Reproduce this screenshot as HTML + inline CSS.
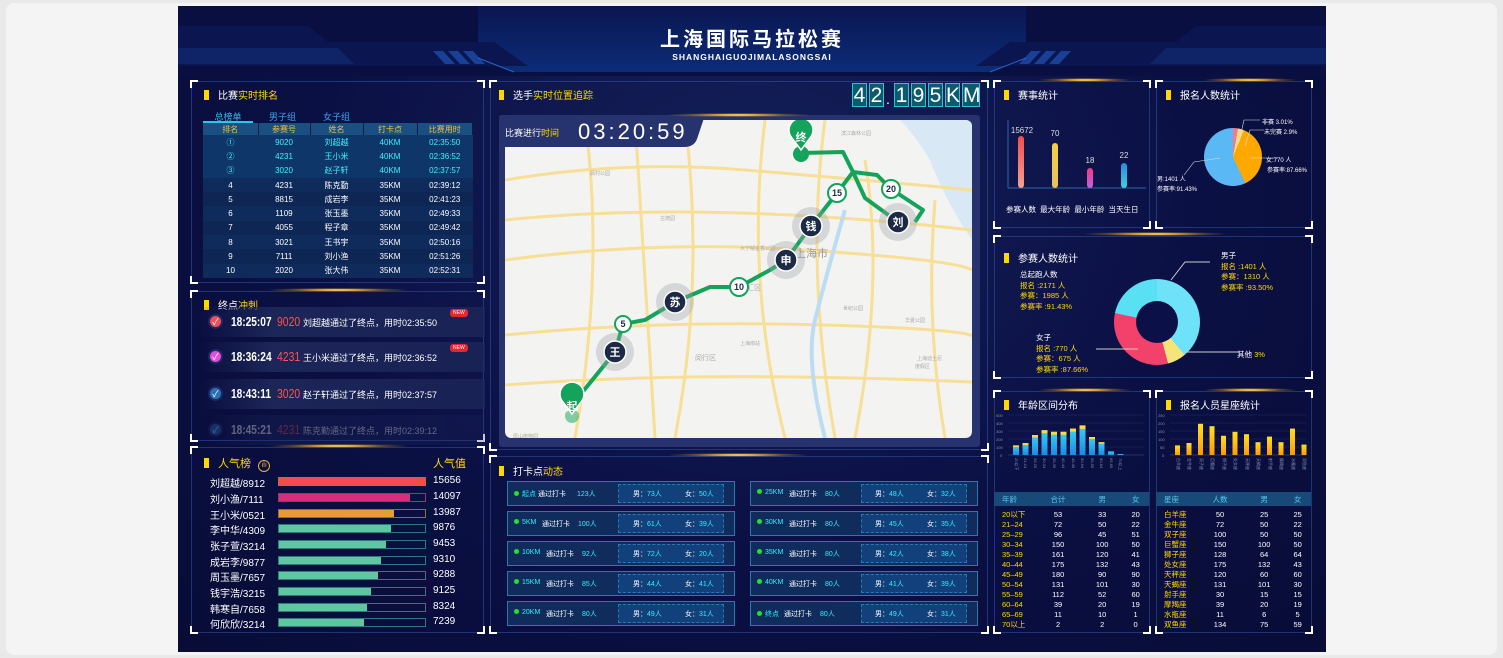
<!DOCTYPE html><html><head><meta charset="utf-8"><style>
*{margin:0;padding:0;box-sizing:border-box}
body{width:1503px;height:658px;background:#e9e9e9;font-family:"Liberation Sans","Noto Sans CJK SC",sans-serif;overflow:hidden;position:relative}
.frame{position:absolute;left:6px;top:3px;width:1491px;height:652px;background:#f4f4f4;border-radius:8px}
.dash{position:absolute;left:178px;top:6px;width:1148px;height:646px;background:radial-gradient(ellipse at 50% 30%,#15205a 0%,#0b1044 55%,#080c36 100%);overflow:hidden}
.a{position:absolute}
.p{position:absolute;border:1px solid rgba(45,85,170,.55)}
.p::after{content:"";position:absolute;left:-2px;top:-2px;right:-2px;bottom:-2px;background:
linear-gradient(#fff,#fff) left top/8px 2px no-repeat,linear-gradient(#fff,#fff) left top/2px 8px no-repeat,
linear-gradient(#fff,#fff) right top/8px 2px no-repeat,linear-gradient(#fff,#fff) right top/2px 8px no-repeat,
linear-gradient(#fff,#fff) left bottom/8px 2px no-repeat,linear-gradient(#fff,#fff) left bottom/2px 8px no-repeat,
linear-gradient(#fff,#fff) right bottom/8px 2px no-repeat,linear-gradient(#fff,#fff) right bottom/2px 8px no-repeat;pointer-events:none}
.t{position:absolute;color:#fff;font-size:10px;white-space:nowrap}
.t::before{content:"";display:inline-block;width:5px;height:10px;background:#ffd800;margin-right:9px;vertical-align:-1px}
.y{color:#ffd800}
.glow{position:absolute;height:4px;background:radial-gradient(ellipse at center,#fff6c0 0%,#f5b82a 20%,rgba(200,140,30,.4) 50%,rgba(0,0,0,0) 75%)}
table{border-collapse:collapse}
.rk{position:absolute;left:203px;top:123px;width:270px;font-size:8px;color:#fff}
.rk td{height:14.3px;text-align:center;padding:0}
.rk tr.h td{background:#1a4f82;color:#f2c33a;height:12px;border-right:1px solid #0b1b45}
.rk tr.g td{background:#0f3668;color:#3ff0ff}
.rk tr.n td{background:#0d2654}
.rk tr:nth-child(odd).n td{background:#0f2b5c}
.fin{position:absolute;left:200px;width:285px;height:30px;background:linear-gradient(90deg,rgba(30,40,90,0) 0%,rgba(30,40,90,.9) 25%,rgba(30,40,90,.7) 100%);font-size:11px;color:#fff;white-space:nowrap}
.fin .ic{position:absolute;left:8px;top:7px;width:15px;height:15px;border-radius:50%;border:2px solid #1d2a62;color:#fff;font-size:9px;text-align:center;line-height:12px}
.fin .tm{position:absolute;left:31px;top:7px;font-weight:bold;font-size:13px;transform:scaleX(.78);transform-origin:left}
.fin .nu{position:absolute;left:77px;top:7px;color:#ff5252;font-size:13px;transform:scaleX(.8);transform-origin:left}
.fin .tx{position:absolute;left:103px;top:9px;font-size:9px}
.new{position:absolute;left:250px;top:2px;background:#e3262f;color:#fff;font-size:5px;padding:1px 3px;border-radius:3px}
.pop{position:absolute;left:210px;font-size:10px;color:#fff;white-space:nowrap;height:14px}
.pop .bar{position:absolute;left:68px;top:2px;width:148px;height:9px;border:1px solid;}
.pop .f{height:100%}
.pop .v{position:absolute;left:223px;top:0}
.ck{position:absolute;height:25px;width:228px;border:1px solid #2a78b0;background:#0f2c5c;font-size:7px;color:#fff;white-space:nowrap}
.ck .r{position:absolute;left:110px;top:2px;right:10px;bottom:2px;background:#12407a;border:1px dashed rgba(60,160,220,.6)}
.ck span{position:absolute;top:7px}
.cy{color:#30f0ff}
.dot{display:inline-block;width:5px;height:5px;border-radius:50%;background:#24e02a;margin-right:3px}
.dg{display:inline-block;width:15px;height:24px;margin-right:2px;background:#0c5a6e;border:1px solid #2bc3d8;color:#fff;font-size:21px;text-align:center;line-height:24px}
.tb{position:absolute;font-size:7.5px;color:#fff;width:155px;line-height:9px}
.tb td{text-align:center;height:9.95px;padding:0;line-height:9px}
.tb td:first-child{color:#ffd800;text-align:left;padding-left:8px}
.tb tr.h td{background:#174a78;color:#58c6f0;height:14px}
.lbl{position:absolute;font-size:6px;color:#fff;white-space:nowrap}
</style></head><body>
<div class="frame"></div>
<div class="dash">
<svg class="a" style="left:0;top:0" width="1148" height="70">
<defs><linearGradient id="hg" x1="0" y1="0" x2="0" y2="1"><stop offset="0" stop-color="#0a1650"/><stop offset="1" stop-color="#0c2c78"/></linearGradient></defs>
<rect x="0" y="0" width="1148" height="70" fill="#0a0f42"/>
<polygon points="300,0 848,0 848,52 812,66 336,66 300,52" fill="url(#hg)"/>
<polygon points="0,20 130,20 150,36 316,36 350,60 0,60" fill="#0b1650"/>
<polygon points="1148,20 1018,20 998,36 832,36 798,60 1148,60" fill="#0b1650"/>
<polygon points="0,42 160,42 176,58 0,58" fill="#0e2466"/>
<polygon points="1148,42 988,42 972,58 1148,58" fill="#0e2466"/>
<polygon points="255,45 265,45 277,58 267,58" fill="#1a3f96"/><polygon points="270,45 280,45 292,58 282,58" fill="#1a3f96"/><polygon points="285,45 295,45 307,58 297,58" fill="#1a3f96"/>
<polygon points="893,45 883,45 871,58 881,58" fill="#1a3f96"/><polygon points="878,45 868,45 856,58 866,58" fill="#1a3f96"/><polygon points="863,45 853,45 841,58 851,58" fill="#1a3f96"/>
<line x1="300" y1="52" x2="336" y2="66" stroke="#2a64c0"/><line x1="848" y1="52" x2="812" y2="66" stroke="#2a64c0"/>
</svg>
<div class="a" style="left:0;top:17px;width:1148px;text-align:center;color:#fff;font-size:20px;font-weight:bold;letter-spacing:3px">上海国际马拉松赛</div>
<div class="a" style="left:0;top:46px;width:1148px;text-align:center;color:#fff;font-size:8.5px;font-weight:bold;letter-spacing:1px">SHANGHAIGUOJIMALASONGSAI</div>
</div>

<div class="p" style="left:191px;top:81px;width:293px;height:202px"></div>
<div class="t" style="left:204px;top:87px">比赛<span class="y">实时排名</span></div>
<div class="a" style="left:203px;top:110px;width:50px;font-size:9px;color:#3ab8e8;text-align:center;border-bottom:2px solid #29c8ea;height:13px">总榜单</div>
<div class="a" style="left:269px;top:110px;font-size:9px;color:#3a9ee8">男子组</div>
<div class="a" style="left:323px;top:110px;font-size:9px;color:#3a9ee8">女子组</div>
<table class="rk"><tr class="h"><td style="width:55px">排名</td><td style="width:52px">参赛号</td><td style="width:53px">姓名</td><td style="width:54px">打卡点</td><td>比赛用时</td></tr>
<tr class="g"><td>①</td><td>9020</td><td>刘超越</td><td>40KM</td><td>02:35:50</td></tr>
<tr class="g"><td>②</td><td>4231</td><td>王小米</td><td>40KM</td><td>02:36:52</td></tr>
<tr class="g"><td>③</td><td>3020</td><td>赵子轩</td><td>40KM</td><td>02:37:57</td></tr>
<tr class="n"><td>4</td><td>4231</td><td>陈克勤</td><td>35KM</td><td>02:39:12</td></tr>
<tr class="n"><td>5</td><td>8815</td><td>成岩李</td><td>35KM</td><td>02:41:23</td></tr>
<tr class="n"><td>6</td><td>1109</td><td>张玉墨</td><td>35KM</td><td>02:49:33</td></tr>
<tr class="n"><td>7</td><td>4055</td><td>程子章</td><td>35KM</td><td>02:49:42</td></tr>
<tr class="n"><td>8</td><td>3021</td><td>王书宇</td><td>35KM</td><td>02:50:16</td></tr>
<tr class="n"><td>9</td><td>7111</td><td>刘小渔</td><td>35KM</td><td>02:51:26</td></tr>
<tr class="n"><td>10</td><td>2020</td><td>张大伟</td><td>35KM</td><td>02:52:31</td></tr></table>

<div class="glow" style="left:270px;top:288px;width:136px"></div>
<div class="p" style="left:191px;top:291px;width:293px;height:150px"></div>
<div class="t" style="left:204px;top:297px">终点<span class="y">冲刺</span></div>
<div class="fin" style="top:307px"><div class="ic" style="background:#f04e5a">✓</div><div class="tm">18:25:07</div><div class="nu">9020</div><div class="tx">刘超越通过了终点，用时02:35:50</div><div class="new">NEW</div></div>
<div class="fin" style="top:342px"><div class="ic" style="background:#e050d8">✓</div><div class="tm">18:36:24</div><div class="nu">4231</div><div class="tx">王小米通过了终点，用时02:36:52</div><div class="new">NEW</div></div>
<div class="fin" style="top:379px"><div class="ic" style="background:#2a70b8">✓</div><div class="tm">18:43:11</div><div class="nu">3020</div><div class="tx">赵子轩通过了终点，用时02:37:57</div></div>
<div class="fin" style="top:415px;opacity:.35"><div class="ic" style="background:#2a70b8">✓</div><div class="tm">18:45:21</div><div class="nu">4231</div><div class="tx">陈克勤通过了终点，用时02:39:12</div></div>

<div class="glow" style="left:270px;top:444px;width:136px"></div>
<div class="p" style="left:191px;top:447px;width:293px;height:186px"></div>
<div class="t" style="left:204px;top:455px;font-size:11px"><span class="y">人气榜</span> <span style="display:inline-block;width:12px;height:12px;border:1px solid #e6b23a;border-radius:50%;color:#e6b23a;font-size:7px;text-align:center;line-height:10px;margin-left:4px">ılı</span></div>
<div class="a y" style="left:433px;top:455px;font-size:11px">人气值</div>
<div class="pop" style="top:475px">刘超越/8912<div class="bar" style="border-color:#f04e4e"><div class="f" style="width:100%;background:#f04e4e"></div></div><div class="v">15656</div></div>
<div class="pop" style="top:491px">刘小渔/7111<div class="bar" style="border-color:#a0306a"><div class="f" style="width:90%;background:#d32f7d"></div></div><div class="v">14097</div></div>
<div class="pop" style="top:507px">王小米/0521<div class="bar" style="border-color:#a06a20"><div class="f" style="width:79%;background:#e79d35"></div></div><div class="v">13987</div></div>
<div class="pop" style="top:522px">李中华/4309<div class="bar" style="border-color:#2f7a78"><div class="f" style="width:77%;background:#5ec6a0"></div></div><div class="v">9876</div></div>
<div class="pop" style="top:538px">张子萱/3214<div class="bar" style="border-color:#2f7a78"><div class="f" style="width:73%;background:#5ec6a0"></div></div><div class="v">9453</div></div>
<div class="pop" style="top:554px">成岩李/9877<div class="bar" style="border-color:#2f7a78"><div class="f" style="width:70%;background:#5ec6a0"></div></div><div class="v">9310</div></div>
<div class="pop" style="top:569px">周玉墨/7657<div class="bar" style="border-color:#2f7a78"><div class="f" style="width:68%;background:#5ec6a0"></div></div><div class="v">9288</div></div>
<div class="pop" style="top:585px">钱宇浩/3215<div class="bar" style="border-color:#2f7a78"><div class="f" style="width:63%;background:#5ec6a0"></div></div><div class="v">9125</div></div>
<div class="pop" style="top:601px">韩寒自/7658<div class="bar" style="border-color:#2f7a78"><div class="f" style="width:60%;background:#5ec6a0"></div></div><div class="v">8324</div></div>
<div class="pop" style="top:616px">何欣欣/3214<div class="bar" style="border-color:#2f7a78"><div class="f" style="width:58%;background:#5ec6a0"></div></div><div class="v">7239</div></div>

<div class="p" style="left:490px;top:81px;width:498px;height:369px"></div>
<div class="t" style="left:499px;top:87px">选手<span class="y">实时位置追踪</span></div>
<div class="a" style="left:852px;top:83px;white-space:nowrap"><span class="dg">4</span><span class="dg">2</span><span style="display:inline-block;width:8px;color:#fff;font-size:14px;vertical-align:bottom">.</span><span class="dg">1</span><span class="dg">9</span><span class="dg">5</span><span class="dg">K</span><span class="dg" style="width:18px">M</span></div>
<div class="a" style="left:499px;top:115px;width:481px;height:332px;background:#27336e;border-radius:3px"></div>
<svg class="a" style="left:505px;top:120px;border-radius:6px" width="467" height="318" viewBox="0 0 467 318">
<rect width="467" height="318" rx="6" fill="#f3f3f1"/>
<path d="M395,0 L467,0 L467,120 Q440,80 425,40 Q410,15 395,0Z" fill="#d9e8f5"/>
<g fill="none" stroke="#f8df96" stroke-width="3">
<path d="M0,60 Q120,40 240,50 T467,70"/><path d="M0,140 Q150,120 300,130 T467,150"/><path d="M0,215 Q150,200 320,205 T467,220"/>
<path d="M0,265 Q200,250 467,262"/><path d="M80,0 Q100,150 70,318"/><path d="M180,0 Q200,160 170,318"/><path d="M260,0 Q240,160 280,318"/><path d="M360,40 Q380,160 350,318"/><path d="M430,80 Q420,200 440,318"/>
<path d="M0,100 Q200,80 467,110"/><path d="M130,0 L150,318"/><path d="M320,0 Q300,150 330,318"/>
</g>
<path d="M340,90 Q320,160 310,200 Q300,240 320,318" fill="none" stroke="#bcdcf3" stroke-width="4"/>
<text x="290" y="137" font-size="11" fill="#9a9a9a">上海市</text>
<text x="235" y="170" font-size="7" fill="#aaa">徐汇区</text>
<text x="190" y="240" font-size="7" fill="#aaa">闵行区</text>
<text x="235" y="225" font-size="5" fill="#aaa">上海南站</text>
<text x="336" y="15" font-size="5" fill="#aaa">滨江森林公园</text>
<text x="412" y="240" font-size="5" fill="#aaa">上海迪士尼</text>
<text x="410" y="248" font-size="5" fill="#aaa">度假区</text>
<text x="400" y="202" font-size="5" fill="#aaa">华夏公园</text>
<text x="338" y="190" font-size="5" fill="#aaa">世纪公园</text>
<text x="235" y="130" font-size="5" fill="#aaa">大宁郁金香公园</text>
<text x="155" y="100" font-size="5" fill="#aaa">古猗园</text>
<text x="85" y="55" font-size="5" fill="#aaa">顾村公园</text>
<text x="8" y="318" font-size="5" fill="#aaa">辰山植物园</text>
<g fill="none" stroke="#13a35a" stroke-width="4" stroke-linejoin="round">
<path d="M67,285 L110,232 L118,204 L140,200 L170,182 L205,167 L234,167 L265,150 L281,140 L306,106 L332,73 L348,52 L338,32 L296,33"/>
<path d="M348,52 L372,55 L386,69 L418,90 L410,102"/><path d="M348,52 L360,78 L393,102"/>
</g>
<g font-size="11" font-weight="bold" text-anchor="middle">
<circle cx="110" cy="232" r="19" fill="#9da0a8" opacity=".35"/><circle cx="110" cy="232" r="11" fill="#1d2a45" stroke="#fff" stroke-width="1.5"/><text x="110" y="236" fill="#fff">王</text>
<circle cx="170" cy="182" r="19" fill="#9da0a8" opacity=".35"/><circle cx="170" cy="182" r="11" fill="#1d2a45" stroke="#fff" stroke-width="1.5"/><text x="170" y="186" fill="#fff">苏</text>
<circle cx="281" cy="140" r="19" fill="#9da0a8" opacity=".35"/><circle cx="281" cy="140" r="11" fill="#1d2a45" stroke="#fff" stroke-width="1.5"/><text x="281" y="144" fill="#fff">申</text>
<circle cx="306" cy="106" r="19" fill="#9da0a8" opacity=".35"/><circle cx="306" cy="106" r="11" fill="#1d2a45" stroke="#fff" stroke-width="1.5"/><text x="306" y="110" fill="#fff">钱</text>
<circle cx="393" cy="102" r="19" fill="#9da0a8" opacity=".35"/><circle cx="393" cy="102" r="11" fill="#1d2a45" stroke="#fff" stroke-width="1.5"/><text x="393" y="106" fill="#fff">刘</text>
<g font-size="9"><circle cx="118" cy="204" r="8" fill="#fff" stroke="#13a35a" stroke-width="2"/><text x="118" y="207" fill="#1d2a45">5</text>
<circle cx="234" cy="167" r="9" fill="#fff" stroke="#13a35a" stroke-width="2"/><text x="234" y="170" fill="#1d2a45">10</text>
<circle cx="332" cy="73" r="9" fill="#fff" stroke="#13a35a" stroke-width="2"/><text x="332" y="76" fill="#1d2a45">15</text>
<circle cx="386" cy="69" r="9" fill="#fff" stroke="#13a35a" stroke-width="2"/><text x="386" y="72" fill="#1d2a45">20</text></g>
<circle cx="67" cy="296" r="7" fill="#13a35a" opacity=".5"/><path d="M67,294 L58,282 A12,12 0 1 1 76,282Z" fill="#13a35a" stroke="#fff" stroke-width="1.5"/><text x="67" y="290" fill="#fff">起</text>
<circle cx="296" cy="34" r="8" fill="#13a35a"/><path d="M296,30 L287,18 A12,12 0 1 1 305,18Z" fill="#13a35a" stroke="#fff" stroke-width="1.5"/><text x="296" y="21" fill="#fff">终</text>
</g>
</svg>
<svg class="a" style="left:499px;top:115px" width="206" height="33"><path d="M3,0 L203,0 Q206,0 204,6 L198,24 Q195,32 185,32 L0,32 L0,3 Q0,0 3,0Z" fill="#27336e"/></svg>
<div class="a" style="left:505px;top:126px;font-size:9px;color:#fff">比赛进行<span class="y">时间</span></div>
<div class="a" style="left:578px;top:119px;font-size:22px;color:#fff;letter-spacing:3px">03:20:59</div>
<div class="glow" style="left:668px;top:113px;width:140px"></div>

<div class="glow" style="left:670px;top:453px;width:136px"></div>
<div class="p" style="left:490px;top:456px;width:498px;height:177px"></div>
<div class="t" style="left:499px;top:463px">打卡点<span class="y">动态</span></div>
<div class="ck" style="left:507px;top:481px"><div class="r"></div><span style="left:6px"><i class="dot"></i><b class="cy" style="font-weight:normal">起点</b></span><span style="left:30px">通过打卡</span><span style="left:69px" class="cy">123人</span><span style="left:125px">男：<b class="cy" style="font-weight:normal">73人</b></span><span style="left:177px">女：<b class="cy" style="font-weight:normal">50人</b></span></div>
<div class="ck" style="left:507px;top:511px"><div class="r"></div><span style="left:6px"><i class="dot"></i><b class="cy" style="font-weight:normal">5KM</b></span><span style="left:34px">通过打卡</span><span style="left:70px" class="cy">100人</span><span style="left:125px">男：<b class="cy" style="font-weight:normal">61人</b></span><span style="left:177px">女：<b class="cy" style="font-weight:normal">39人</b></span></div>
<div class="ck" style="left:507px;top:541px"><div class="r"></div><span style="left:6px"><i class="dot"></i><b class="cy" style="font-weight:normal">10KM</b></span><span style="left:38px">通过打卡</span><span style="left:74px" class="cy">92人</span><span style="left:125px">男：<b class="cy" style="font-weight:normal">72人</b></span><span style="left:177px">女：<b class="cy" style="font-weight:normal">20人</b></span></div>
<div class="ck" style="left:507px;top:571px"><div class="r"></div><span style="left:6px"><i class="dot"></i><b class="cy" style="font-weight:normal">15KM</b></span><span style="left:38px">通过打卡</span><span style="left:74px" class="cy">85人</span><span style="left:125px">男：<b class="cy" style="font-weight:normal">44人</b></span><span style="left:177px">女：<b class="cy" style="font-weight:normal">41人</b></span></div>
<div class="ck" style="left:507px;top:601px"><div class="r"></div><span style="left:6px"><i class="dot"></i><b class="cy" style="font-weight:normal">20KM</b></span><span style="left:38px">通过打卡</span><span style="left:74px" class="cy">80人</span><span style="left:125px">男：<b class="cy" style="font-weight:normal">49人</b></span><span style="left:177px">女：<b class="cy" style="font-weight:normal">31人</b></span></div>
<div class="ck" style="left:750px;top:481px"><div class="r"></div><span style="left:6px"><i class="dot"></i><b class="cy" style="font-weight:normal">25KM</b></span><span style="left:38px">通过打卡</span><span style="left:74px" class="cy">80人</span><span style="left:124px">男：<b class="cy" style="font-weight:normal">48人</b></span><span style="left:176px">女：<b class="cy" style="font-weight:normal">32人</b></span></div>
<div class="ck" style="left:750px;top:511px"><div class="r"></div><span style="left:6px"><i class="dot"></i><b class="cy" style="font-weight:normal">30KM</b></span><span style="left:38px">通过打卡</span><span style="left:74px" class="cy">80人</span><span style="left:124px">男：<b class="cy" style="font-weight:normal">45人</b></span><span style="left:176px">女：<b class="cy" style="font-weight:normal">35人</b></span></div>
<div class="ck" style="left:750px;top:541px"><div class="r"></div><span style="left:6px"><i class="dot"></i><b class="cy" style="font-weight:normal">35KM</b></span><span style="left:38px">通过打卡</span><span style="left:74px" class="cy">80人</span><span style="left:124px">男：<b class="cy" style="font-weight:normal">42人</b></span><span style="left:176px">女：<b class="cy" style="font-weight:normal">38人</b></span></div>
<div class="ck" style="left:750px;top:571px"><div class="r"></div><span style="left:6px"><i class="dot"></i><b class="cy" style="font-weight:normal">40KM</b></span><span style="left:38px">通过打卡</span><span style="left:74px" class="cy">80人</span><span style="left:124px">男：<b class="cy" style="font-weight:normal">41人</b></span><span style="left:176px">女：<b class="cy" style="font-weight:normal">39人</b></span></div>
<div class="ck" style="left:750px;top:601px"><div class="r"></div><span style="left:6px"><i class="dot"></i><b class="cy" style="font-weight:normal">终点</b></span><span style="left:33px">通过打卡</span><span style="left:69px" class="cy">80人</span><span style="left:124px">男：<b class="cy" style="font-weight:normal">49人</b></span><span style="left:176px">女：<b class="cy" style="font-weight:normal">31人</b></span></div>

<div class="glow" style="left:1040px;top:78px;width:90px"></div><div class="glow" style="left:1205px;top:78px;width:90px"></div>
<div class="p" style="left:994px;top:81px;width:156px;height:147px"></div>
<div class="t" style="left:1004px;top:87px">赛事统计</div>
<svg class="a" style="left:1000px;top:120px" width="150" height="100">
<line x1="8" y1="0" x2="8" y2="68" stroke="#2a6aa8"/><line x1="8" y1="68" x2="146" y2="68" stroke="#2a6aa8"/>
<defs><linearGradient id="r1" x1="0" y1="0" x2="0" y2="1"><stop offset="0" stop-color="#f04e4e"/><stop offset="1" stop-color="#f5a090"/></linearGradient>
<linearGradient id="r2" x1="0" y1="0" x2="0" y2="1"><stop offset="0" stop-color="#f5d040"/><stop offset="1" stop-color="#e8c060"/></linearGradient>
<linearGradient id="r3" x1="0" y1="0" x2="0" y2="1"><stop offset="0" stop-color="#f03a80"/><stop offset="1" stop-color="#c060e0"/></linearGradient>
<linearGradient id="r4" x1="0" y1="0" x2="0" y2="1"><stop offset="0" stop-color="#2a8ae0"/><stop offset="1" stop-color="#40d0e0"/></linearGradient></defs>
<rect x="18" y="16" width="6" height="52" rx="3" fill="url(#r1)"/><rect x="52" y="23" width="6" height="45" rx="3" fill="url(#r2)"/><rect x="87" y="48" width="6" height="20" rx="3" fill="url(#r3)"/><rect x="121" y="43" width="6" height="25" rx="3" fill="url(#r4)"/>
<g fill="#ddd" font-size="8" text-anchor="middle"><text x="22" y="13">15672</text><text x="55" y="16">70</text><text x="90" y="43">18</text><text x="124" y="38">22</text></g>
</svg>
<div class="a" style="left:1006px;top:204px;font-size:7.5px;color:#fff;white-space:nowrap">参赛人数 &nbsp;最大年龄 &nbsp;最小年龄 &nbsp;当天生日</div>

<div class="p" style="left:1156px;top:81px;width:156px;height:147px"></div>
<div class="t" style="left:1166px;top:87px">报名人数统计</div>
<div class="a" style="left:1204px;top:128px;width:58px;height:58px;border-radius:50%;background:conic-gradient(#f27a8c 0 10deg,#f5dc80 10deg 22deg,#ffa800 22deg 155deg,#5ab8f5 155deg 360deg)"></div>
<svg class="a" style="left:1150px;top:110px" width="160" height="90" fill="none" stroke="#ddd" stroke-width=".6">
<polyline points="89,32 94,10 110,10"/><polyline points="95,36 100,20 114,20"/><polyline points="100,48 128,48"/><polyline points="70,48 44,52 34,65"/></svg>
<div class="lbl" style="left:1262px;top:117px">非赛 3.01%</div><div class="lbl" style="left:1264px;top:127px">未完赛 2.9%</div>
<div class="lbl" style="left:1266px;top:155px">女:770 人</div><div class="lbl y" style="left:1267px;top:165px">参赛率:87.66%</div>
<div class="lbl" style="left:1157px;top:174px">男:1401 人</div><div class="lbl y" style="left:1157px;top:184px">参赛率:91.43%</div>

<div class="glow" style="left:1085px;top:232px;width:140px"></div>
<div class="p" style="left:994px;top:236px;width:318px;height:142px"></div>
<div class="t" style="left:1004px;top:250px">参赛人数统计</div>
<div class="a" style="left:1114px;top:279px;width:86px;height:86px;border-radius:50%;background:conic-gradient(#6ee2f8 0 140deg,#f5e47a 140deg 165deg,#f2416a 165deg 282deg,#5ae0f5 282deg 360deg)"></div>
<div class="a" style="left:1136px;top:301px;width:42px;height:42px;border-radius:50%;background:#0b1148"></div>
<svg class="a" style="left:1080px;top:260px" width="160" height="110" fill="none" stroke="#ccc" stroke-width="1"><polyline points="91,20 105,2 130,2"/><polyline points="58,89 16,89"/><polyline points="104,92 160,92"/></svg>
<div class="a" style="left:1020px;top:270px;font-size:7.5px;color:#fff;line-height:10.5px">总起跑人数<br><span class="y">报名 :2171 人<br>参赛：1985 人<br>参赛率 :91.43%</span></div>
<div class="a" style="left:1036px;top:333px;font-size:7.5px;color:#fff;line-height:10.5px">女子<br><span class="y">报名 :770 人<br>参赛：675 人<br>参赛率 :87.66%</span></div>
<div class="a" style="left:1221px;top:251px;font-size:7.5px;color:#fff;line-height:10.5px">男子<br><span class="y">报名 :1401 人<br>参赛：1310 人<br>参赛率 :93.50%</span></div>
<div class="a" style="left:1237px;top:349px;font-size:7.5px;color:#fff">其他 <span class="y">3%</span></div>

<div class="glow" style="left:1040px;top:388px;width:90px"></div><div class="glow" style="left:1205px;top:388px;width:90px"></div>
<div class="p" style="left:994px;top:391px;width:156px;height:242px"></div>
<div class="t" style="left:1004px;top:397px">年龄区间分布</div>
<svg class="a" style="left:994px;top:410px" width="156" height="80">
<g stroke="#1c2d66" stroke-width=".6"><line x1="14" y1="5" x2="150" y2="5"/><line x1="14" y1="13" x2="150" y2="13"/><line x1="14" y1="21" x2="150" y2="21"/><line x1="14" y1="29" x2="150" y2="29"/><line x1="14" y1="37" x2="150" y2="37"/><line x1="14" y1="45" x2="150" y2="45" stroke="#2a5aa0"/></g>
<g fill="#8090b0" font-size="4"><text x="2" y="7">500</text><text x="2" y="15">400</text><text x="2" y="23">300</text><text x="2" y="31">200</text><text x="2" y="39">100</text><text x="6" y="47">0</text></g>
<defs><linearGradient id="bb" x1="0" y1="0" x2="0" y2="1"><stop offset="0" stop-color="#3ad2f0"/><stop offset="1" stop-color="#1a8ae8"/></linearGradient></defs>
<g fill="url(#bb)"><rect x="19" y="35.4" width="6" height="9.6"/><rect x="28.5" y="33" width="6" height="12"/><rect x="38" y="25" width="6" height="20"/><rect x="47.5" y="20.2" width="6" height="24.8"/><rect x="57" y="21.8" width="6" height="23.2"/><rect x="66.5" y="21.8" width="6" height="23.2"/><rect x="76" y="18.6" width="6" height="26.4"/><rect x="85.5" y="15.4" width="6" height="29.6"/><rect x="95" y="27" width="6" height="18"/><rect x="104.5" y="32.2" width="6" height="12.8"/><rect x="114" y="41.4" width="6" height="3.6"/><rect x="123.5" y="44" width="6" height="1"/></g>
<g fill="#ffd84a"><rect x="19" y="35.4" width="6" height="1.5"/><rect x="28.5" y="33" width="6" height="2"/><rect x="38" y="25" width="6" height="2.5"/><rect x="47.5" y="20.2" width="6" height="3"/><rect x="57" y="21.8" width="6" height="3"/><rect x="66.5" y="21.8" width="6" height="3"/><rect x="76" y="18.6" width="6" height="3"/><rect x="85.5" y="15.4" width="6" height="3.5"/><rect x="95" y="27" width="6" height="2"/><rect x="104.5" y="32.2" width="6" height="1.5"/></g>
<g fill="#8090b0" font-size="4"><text transform="translate(21,48) rotate(90)">20以下</text><text transform="translate(30,48) rotate(90)">21-24</text><text transform="translate(40,48) rotate(90)">25-29</text><text transform="translate(49,48) rotate(90)">30-34</text><text transform="translate(59,48) rotate(90)">35-39</text><text transform="translate(68,48) rotate(90)">40-44</text><text transform="translate(78,48) rotate(90)">45-49</text><text transform="translate(87,48) rotate(90)">50-54</text><text transform="translate(97,48) rotate(90)">55-59</text><text transform="translate(106,48) rotate(90)">60-64</text><text transform="translate(116,48) rotate(90)">65-69</text><text transform="translate(125,48) rotate(90)">70以上</text></g>
</svg>
<table class="tb" style="left:994px;top:492px"><tr class="h"><td style="width:40px;color:#58c6f0">年龄</td><td>合计</td><td>男</td><td>女</td></tr><tr><td colspan="4" style="height:4px;padding:0"></td></tr>
<tr><td>20以下</td><td>53</td><td>33</td><td>20</td></tr><tr><td>21–24</td><td>72</td><td>50</td><td>22</td></tr><tr><td>25–29</td><td>96</td><td>45</td><td>51</td></tr><tr><td>30–34</td><td>150</td><td>100</td><td>50</td></tr><tr><td>35–39</td><td>161</td><td>120</td><td>41</td></tr><tr><td>40–44</td><td>175</td><td>132</td><td>43</td></tr><tr><td>45–49</td><td>180</td><td>90</td><td>90</td></tr><tr><td>50–54</td><td>131</td><td>101</td><td>30</td></tr><tr><td>55–59</td><td>112</td><td>52</td><td>60</td></tr><tr><td>60–64</td><td>39</td><td>20</td><td>19</td></tr><tr><td>65–69</td><td>11</td><td>10</td><td>1</td></tr><tr><td>70以上</td><td>2</td><td>2</td><td>0</td></tr></table>

<div class="p" style="left:1156px;top:391px;width:156px;height:242px"></div>
<div class="t" style="left:1166px;top:397px">报名人员星座统计</div>
<svg class="a" style="left:1156px;top:410px" width="156" height="80">
<g stroke="#1c2d66" stroke-width=".6"><line x1="14" y1="5" x2="150" y2="5"/><line x1="14" y1="13" x2="150" y2="13"/><line x1="14" y1="21" x2="150" y2="21"/><line x1="14" y1="29" x2="150" y2="29"/><line x1="14" y1="37" x2="150" y2="37"/><line x1="14" y1="45" x2="150" y2="45" stroke="#2a5aa0"/></g>
<g fill="#8090b0" font-size="4"><text x="2" y="7">250</text><text x="2" y="15">200</text><text x="2" y="23">150</text><text x="2" y="31">100</text><text x="4" y="39">50</text><text x="6" y="47">0</text></g>
<defs><linearGradient id="gb" x1="0" y1="0" x2="0" y2="1"><stop offset="0" stop-color="#ffe020"/><stop offset="1" stop-color="#ff9a00"/></linearGradient></defs>
<g fill="url(#gb)"><rect x="19" y="35.4" width="5" height="9.6"/><rect x="30.5" y="33" width="5" height="12"/><rect x="42" y="13.8" width="5" height="31.2"/><rect x="53.5" y="16.2" width="5" height="28.8"/><rect x="65" y="25.8" width="5" height="19.2"/><rect x="76.5" y="21.8" width="5" height="23.2"/><rect x="88" y="24.2" width="5" height="20.8"/><rect x="99.5" y="32.2" width="5" height="12.8"/><rect x="111" y="26.6" width="5" height="18.4"/><rect x="122.5" y="32.2" width="5" height="12.8"/><rect x="134" y="18.6" width="5" height="26.4"/><rect x="145.5" y="34.6" width="5" height="10.4"/></g>
<g fill="#8090b0" font-size="4"><text transform="translate(21,48) rotate(90)">白羊座</text><text transform="translate(32,48) rotate(90)">金牛座</text><text transform="translate(44,48) rotate(90)">双子座</text><text transform="translate(55,48) rotate(90)">巨蟹座</text><text transform="translate(67,48) rotate(90)">狮子座</text><text transform="translate(78,48) rotate(90)">处女座</text><text transform="translate(90,48) rotate(90)">天秤座</text><text transform="translate(101,48) rotate(90)">天蝎座</text><text transform="translate(113,48) rotate(90)">射手座</text><text transform="translate(124,48) rotate(90)">摩羯座</text><text transform="translate(136,48) rotate(90)">水瓶座</text><text transform="translate(147,48) rotate(90)">双鱼座</text></g>
</svg>
<table class="tb" style="left:1156px;top:492px"><tr class="h"><td style="width:40px;color:#58c6f0">星座</td><td>人数</td><td>男</td><td>女</td></tr><tr><td colspan="4" style="height:4px;padding:0"></td></tr>
<tr><td>白羊座</td><td>50</td><td>25</td><td>25</td></tr><tr><td>金牛座</td><td>72</td><td>50</td><td>22</td></tr><tr><td>双子座</td><td>100</td><td>50</td><td>50</td></tr><tr><td>巨蟹座</td><td>150</td><td>100</td><td>50</td></tr><tr><td>狮子座</td><td>128</td><td>64</td><td>64</td></tr><tr><td>处女座</td><td>175</td><td>132</td><td>43</td></tr><tr><td>天秤座</td><td>120</td><td>60</td><td>60</td></tr><tr><td>天蝎座</td><td>131</td><td>101</td><td>30</td></tr><tr><td>射手座</td><td>30</td><td>15</td><td>15</td></tr><tr><td>摩羯座</td><td>39</td><td>20</td><td>19</td></tr><tr><td>水瓶座</td><td>11</td><td>6</td><td>5</td></tr><tr><td>双鱼座</td><td>134</td><td>75</td><td>59</td></tr></table>
</body></html>
